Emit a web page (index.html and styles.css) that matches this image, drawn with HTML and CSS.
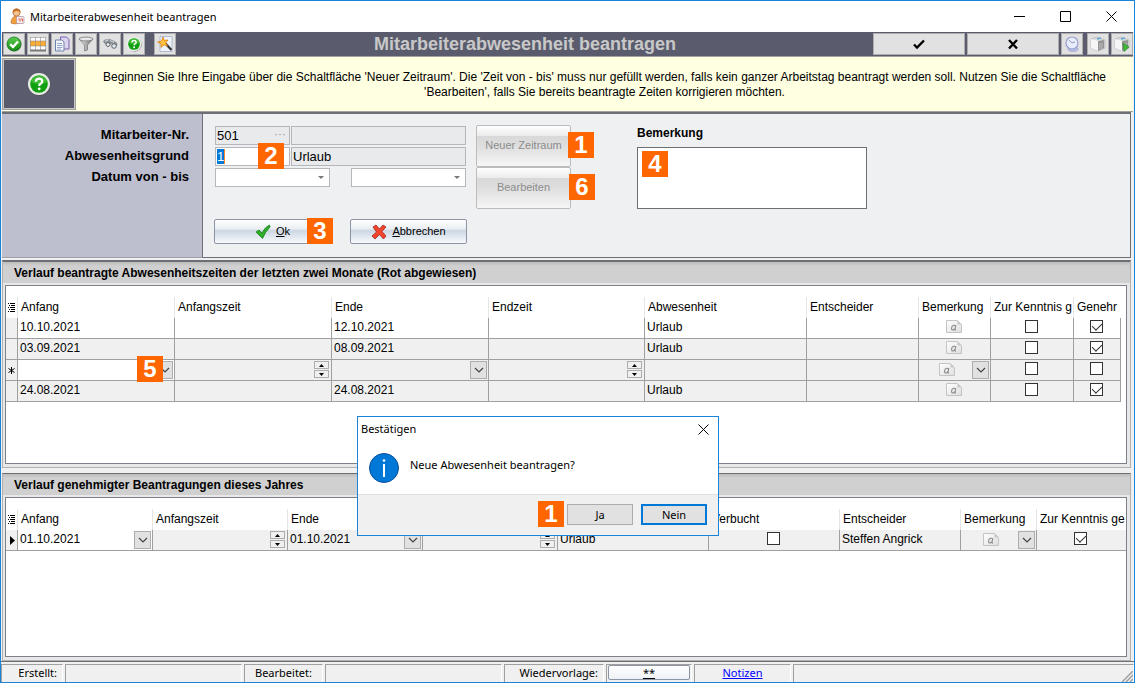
FILE: index.html
```html
<!DOCTYPE html>
<html lang="de">
<head>
<meta charset="utf-8">
<title>Mitarbeiterabwesenheit beantragen</title>
<link rel="stylesheet" href="styles.css">
</head>
<body>
<svg class="defs" aria-hidden="true">
  <defs>
    <linearGradient id="green" x1="0" y1="0" x2="0" y2="1"><stop offset="0" stop-color="#5fce4e"/><stop offset="1" stop-color="#0d8a10"/></linearGradient>
    <linearGradient id="steel" x1="0" y1="0" x2="1" y2="0"><stop offset="0" stop-color="#f4f4f4"/><stop offset="1" stop-color="#6c6c6c"/></linearGradient>
    <linearGradient id="fade" x1="0" y1="0" x2="1" y2="1"><stop offset="0" stop-color="#ffffff"/><stop offset="1" stop-color="#dedede"/></linearGradient>
    <symbol id="help" viewBox="0 0 24 24">
      <circle cx="13" cy="13" r="10.5" fill="#444" opacity=".6"/>
      <circle cx="12" cy="12" r="11" fill="#e9ede6"/>
      <circle cx="12" cy="12" r="8.8" fill="#12a012"/>
      <path d="M4 10a8.300 8.300 0 0 1 16 0q-8 4-16 0z" fill="#5fd04c" opacity=".6"/>
      <path d="M8.800 9.600q.3-3 3.300-3t3.200 2.700q0 1.500-1.800 2.500-1.300.8-1.300 2.200" fill="none" stroke="#fff" stroke-width="2.200"/>
      <circle cx="12.200" cy="16.800" r="1.400" fill="#fff"/>
    </symbol>
    <symbol id="chevron" viewBox="0 0 10 10"><path d="M1 3l4 4 4-4" fill="none" stroke="#444" stroke-width="1.200"/></symbol>
    <symbol id="up" viewBox="0 0 5 3"><path d="M0 3h5L2.500 0z"/></symbol>
    <symbol id="down" viewBox="0 0 5 3"><path d="M0 0h5L2.500 3z"/></symbol>
    <symbol id="memo" viewBox="0 0 16 13">
      <path d="M.5.5h11l4 4v8H.5z" fill="url(#fade)" stroke="#c4c4c4"/>
      <path d="M11.500.5v4h4z" fill="#c8c8c8"/>
      <path d="M9.800 5.200L9 9.600q0 .7.9.5M9.500 6q-.8-1-2-.7Q5.600 6 5.500 8.400q.2 1.900 1.800 1.500Q8.600 9.500 9.300 8" fill="none" stroke="#8c8c8c" stroke-width="1.100"/>
    </symbol>
    <symbol id="list" viewBox="0 0 7 9"><path d="M0 .5h1m1 0h5M1 2.500h1m1 0h4M0 4.500h1m1 0h5M1 6.500h1m1 0h4M0 8.500h1m1 0h5" stroke="#000"/></symbol>
    <symbol id="close" viewBox="0 0 11 11"><path d="M.5.5l10 10M10.500.5l-10 10" stroke="#000" stroke-width="1"/></symbol>
    <symbol id="box" viewBox="0 0 16 16">
      <path d="M1 3l6-2 8 3v8l-7 3-7-3z" fill="#dcdcdc" stroke="#aaa" stroke-width=".6"/>
      <path d="M1 3l7 2v10l-7-3z" fill="#f6f6f6"/>
      <path d="M8 5l6-1v8l-6 3z" fill="#969696"/>
      <path d="M9 8h4M9 10h4M9 12h3" stroke="#c8c8c8" stroke-width=".8"/>
      <path d="M7 3l4-1" stroke="#5aa7d8" stroke-width="1.500"/>
    </symbol>
  </defs>
</svg>

<div class="window">
  <header class="titlebar">
    <svg class="app-icon" viewBox="0 0 16 17">
      <path d="M1 15q0-6 5-7l4 2v5q-5 2-9 0z" fill="#f0a03c" stroke="#b9652a" stroke-width=".6"/>
      <circle cx="6.500" cy="4.500" r="3.600" fill="#f6c38e" stroke="#a35a22" stroke-width=".7"/>
      <path d="M2.800 5Q2.600.4 7 .6q3.800.5 3.500 4.200Q8.500 2.500 6 3z" fill="#c5732c"/>
      <rect x="6.500" y="8.500" width="7.500" height="7" rx="1" fill="#f7eaea" stroke="#a98fa0" stroke-width=".7"/>
      <path d="M8.500 11h1.500v2.500M11 11h1.500v2.500" fill="none" stroke="#d8543c" stroke-width=".9"/>
    </svg>
    <h1 class="window-title">Mitarbeiterabwesenheit beantragen</h1>
    <div class="window-controls">
      <button type="button" aria-label="Minimieren"><svg viewBox="0 0 11 11"><path d="M0 5.500h11" stroke="#000"/></svg></button>
      <button type="button" aria-label="Maximieren"><svg viewBox="0 0 11 11"><path d="M.5.5h10v10H.5z" fill="none" stroke="#000"/></svg></button>
      <button type="button" aria-label="Schließen"><svg><use href="#close"/></svg></button>
    </div>
  </header>

  <div class="toolbar">
    <div class="tools">
      <button type="button" class="tool" aria-label="Speichern"><svg viewBox="0 0 16 16"><circle cx="8.500" cy="8.500" r="7" fill="#555" opacity=".5"/><circle cx="8" cy="8" r="7" fill="url(#green)" stroke="#0b6d12" stroke-width=".7"/><path d="M4.200 8.200l2.800 2.800 5-5.500" fill="none" stroke="#fff" stroke-width="2.400"/></svg></button>
      <button type="button" class="tool" aria-label="Tabelle"><svg viewBox="0 0 16 16"><path d="M0 1h16v14H0z" fill="#fff"/><path d="M0 5h16v5H0z" fill="#ffad33"/><path d="M0 1.500h16M0 5h16M0 10h16M.5 1v14M5.500 1v14M10.500 1v14M15.500 1v14" stroke="#8c8c8c" stroke-width=".6"/><path d="M0 14.500h16" stroke="#777" stroke-width="2"/></svg></button>
      <button type="button" class="tool" aria-label="Kopieren"><svg viewBox="0 0 16 16"><path d="M6.500 1h6l2.500 2.500V13H6.500z" fill="#dcd3ef" stroke="#7a62ac"/><path d="M1.500 4h6.500l2 2v9H1.500z" fill="#f3f6fb" stroke="#6e83ab"/><path d="M3 7.500h5M3 9.500h5.500M3 11.500h5.500M3 13.200h4" stroke="#8aa2c8" stroke-width=".9"/></svg></button>
      <button type="button" class="tool" aria-label="Filter"><svg viewBox="0 0 16 16"><path d="M1 3l5.500 6v6l3-1V9L15 3z" fill="url(#steel)" stroke="#666" stroke-width=".6"/><ellipse cx="8" cy="3" rx="7" ry="1.900" fill="#e8e8e8" stroke="#777" stroke-width=".8"/></svg></button>
      <button type="button" class="tool" aria-label="Suchen"><svg viewBox="0 0 16 16"><path d="M1 5.500Q2.500 2.500 6 3.500q1.500-1 3 0l5 2.500q1.500 1 1.500 3l-2 2-4-3-3 1-4-1.500z" fill="#8b9095"/><path d="M3 5l3-.5M8 4.500l4 2" stroke="#d8dcdf"/><circle cx="6" cy="8.500" r="2" fill="#dce9f3" stroke="#666"/><circle cx="12" cy="10" r="2.300" fill="#dce9f3" stroke="#666"/></svg></button>
      <button type="button" class="tool" aria-label="Hilfe"><svg><use href="#help"/></svg></button>
      <button type="button" class="tool tool-apart" aria-label="Assistent"><svg viewBox="0 0 16 16"><path d="M3 .5h12v15H3z" fill="#eef3fb" stroke="#9fb1cc" stroke-width=".8"/><path d="M8 7l6.500 7" stroke="#333" stroke-width="2.200"/><path d="M6 1l1.300 3.500L11 4 8.600 6.800 10.500 10 7 8.800 4 11.500 4.200 8 .8 6l3.700-.8z" fill="#ffc43a" stroke="#e07d10" stroke-width=".8"/></svg></button>
    </div>
    <h2 class="toolbar-title">Mitarbeiterabwesenheit beantragen</h2>
    <div class="actions">
      <button type="button" class="action" aria-label="Bestätigen"><svg viewBox="0 0 12 12"><path d="M1 6.500l3 3L11 2.500" fill="none" stroke="#000" stroke-width="2.300"/></svg></button>
      <button type="button" class="action" aria-label="Verwerfen"><svg viewBox="0 0 12 12"><path d="M2 2l8 8.500M10 2L2 10.500" stroke="#000" stroke-width="2.400"/></svg></button>
      <button type="button" class="tool" aria-label="Wiedervorlage"><svg viewBox="0 0 16 16"><ellipse cx="9" cy="13" rx="5" ry="2.300" fill="#b9c0e8" stroke="#8e96c4" stroke-width=".6"/><circle cx="8" cy="7" r="6" fill="#e8ecfc" stroke="#98a0cf" stroke-width="1.200"/><path d="M5 4l3 3 3-1" fill="none" stroke="#7a84ad" stroke-width=".8"/></svg></button>
      <button type="button" class="tool tool-box" aria-label="Modul"><svg><use href="#box"/></svg></button>
      <button type="button" class="tool" aria-label="Modul starten"><svg viewBox="0 0 16 16"><use href="#box"/><path d="M9 7l6 4-5 4.500z" fill="#42b83b" stroke="#1e8220" stroke-width=".6"/></svg></button>
    </div>
  </div>

  <div class="notice">
    <button type="button" class="notice-help" aria-label="Hilfe"><svg><use href="#help"/></svg></button>
    <p class="notice-text">Beginnen Sie Ihre Eingabe über die Schaltfläche 'Neuer Zeitraum'. Die 'Zeit von - bis' muss nur gefüllt werden, falls kein ganzer Arbeitstag beantragt werden soll. Nutzen Sie die Schaltfläche 'Bearbeiten', falls Sie bereits beantragte Zeiten korrigieren möchten.</p>
  </div>

  <form class="request">
    <div class="labels">
      <label for="nr">Mitarbeiter-Nr.</label>
      <label for="grund">Abwesenheitsgrund</label>
      <label for="von">Datum von - bis</label>
    </div>
    <div class="panel">
      <div class="fields">
        <div class="field-row">
          <span class="lookup"><input id="nr" class="field" value="501" readonly><span class="dots">···</span></span>
          <input class="field wide" aria-label="Name" readonly>
        </div>
        <div class="field-row">
          <span class="lookup"><span class="field code"><input id="grund" value="1"></span><span class="badge badge-2">2</span></span>
          <input class="field wide" aria-label="Grund" value="Urlaub" readonly>
        </div>
        <div class="field-row dates">
          <span class="date"><select id="von"><option></option></select></span>
          <span class="date"><select aria-label="Datum bis"><option></option></select></span>
        </div>
        <div class="field-row confirm">
          <button type="button" class="glossy"><svg viewBox="0 0 16 16"><path d="M1 8l3-2 3 3Q10 3 14.500 1L15 3Q10 8 7.500 14.500z" fill="#2fae2a" stroke="#16801a" stroke-width=".8"/></svg><span><u>O</u>k</span><span class="badge badge-3">3</span></button>
          <button type="button" class="glossy"><svg viewBox="0 0 16 16"><path d="M2 3l3-2 3.500 4L12 1l3 2-4 4.500 4 4.500-2.500 3L8.500 10.500 4 15l-3-3 4.500-4z" fill="#f0452c" stroke="#a5261a" stroke-width=".8"/></svg><span><u>A</u>bbrechen</span></button>
        </div>
      </div>
      <div class="periods">
        <div class="period"><button type="button" class="muted" disabled>Neuer Zeitraum</button><span class="badge badge-1">1</span></div>
        <div class="period"><button type="button" class="muted" disabled>Bearbeiten</button><span class="badge badge-6">6</span></div>
      </div>
      <div class="remark">
        <label for="bemerkung">Bemerkung</label>
        <div class="remark-box"><textarea id="bemerkung"></textarea><span class="badge badge-4">4</span></div>
      </div>
    </div>
  </form>

  <section class="history history-requested">
    <h3>Verlauf beantragte Abwesenheitszeiten der letzten zwei Monate (Rot abgewiesen)</h3>
    <div class="grid-box">
      <table class="grid">
        <colgroup><col class="w12"><col class="w157"><col class="w157"><col class="w157"><col class="w156"><col class="w162"><col class="w112"><col class="w72"><col class="w83"><col class="w47"></colgroup>
        <thead>
          <tr><th class="mark"><svg class="list"><use href="#list"/></svg></th><th>Anfang</th><th>Anfangszeit</th><th>Ende</th><th>Endzeit</th><th>Abwesenheit</th><th>Entscheider</th><th>Bemerkung</th><th>Zur Kenntnis g</th><th>Genehr</th></tr>
        </thead>
        <tbody>
          <tr><td class="mark"></td><td>10.10.2021</td><td></td><td>12.10.2021</td><td></td><td>Urlaub</td><td></td><td class="mid"><svg class="memo"><use href="#memo"/></svg></td><td class="mid"><input type="checkbox" aria-label="Zur Kenntnis genommen"></td><td class="mid"><input type="checkbox" checked aria-label="Genehmigt"></td></tr>
          <tr class="shade"><td class="mark"></td><td>03.09.2021</td><td></td><td>08.09.2021</td><td></td><td>Urlaub</td><td></td><td class="mid"><svg class="memo"><use href="#memo"/></svg></td><td class="mid"><input type="checkbox" aria-label="Zur Kenntnis genommen"></td><td class="mid"><input type="checkbox" checked aria-label="Genehmigt"></td></tr>
          <tr class="shade"><td class="mark"><svg class="star" viewBox="0 0 7 7"><path d="M3.500 0v7M.5 1.500l6 4M6.500 1.500l-6 4" stroke="#000"/></svg></td>
            <td class="edit"><div class="cell"><button type="button" class="drop" aria-label="Anfang wählen"><svg><use href="#chevron"/></svg></button><span class="badge badge-5">5</span></div></td>
            <td><div class="cell"><span class="spin"><button type="button" aria-label="Später"><svg><use href="#up"/></svg></button><button type="button" aria-label="Früher"><svg><use href="#down"/></svg></button></span></div></td>
            <td><div class="cell"><button type="button" class="drop" aria-label="Ende wählen"><svg><use href="#chevron"/></svg></button></div></td>
            <td><div class="cell"><span class="spin"><button type="button" aria-label="Später"><svg><use href="#up"/></svg></button><button type="button" aria-label="Früher"><svg><use href="#down"/></svg></button></span></div></td>
            <td></td><td></td>
            <td><div class="cell"><span class="memo-slot"><svg class="memo"><use href="#memo"/></svg></span><button type="button" class="drop" aria-label="Bemerkung öffnen"><svg><use href="#chevron"/></svg></button></div></td>
            <td class="mid"><input type="checkbox" aria-label="Zur Kenntnis genommen"></td><td class="mid"><input type="checkbox" aria-label="Genehmigt"></td></tr>
          <tr class="shade"><td class="mark"></td><td>24.08.2021</td><td></td><td>24.08.2021</td><td></td><td>Urlaub</td><td></td><td class="mid"><svg class="memo"><use href="#memo"/></svg></td><td class="mid"><input type="checkbox" aria-label="Zur Kenntnis genommen"></td><td class="mid"><input type="checkbox" checked aria-label="Genehmigt"></td></tr>
        </tbody>
      </table>
    </div>
  </section>

  <section class="history history-approved">
    <h3>Verlauf genehmigter Beantragungen dieses Jahres</h3>
    <div class="grid-box">
      <table class="grid">
        <colgroup><col class="w12"><col class="w135"><col class="w135"><col class="w135"><col class="w135"><col class="w151"><col class="w131"><col class="w121"><col class="w76"><col class="w90"></colgroup>
        <thead>
          <tr><th class="mark"><svg class="list"><use href="#list"/></svg></th><th>Anfang</th><th>Anfangszeit</th><th>Ende</th><th></th><th></th><th>Verbucht</th><th>Entscheider</th><th>Bemerkung</th><th>Zur Kenntnis ge</th></tr>
        </thead>
        <tbody>
          <tr class="shade"><td class="mark"><svg class="current" viewBox="0 0 5 9"><path d="M0 0l5 4.500L0 9z"/></svg></td>
            <td class="edit"><div class="cell"><span class="value">01.10.2021</span><button type="button" class="drop" aria-label="Anfang wählen"><svg><use href="#chevron"/></svg></button></div></td>
            <td><div class="cell"><span class="spin"><button type="button" aria-label="Später"><svg><use href="#up"/></svg></button><button type="button" aria-label="Früher"><svg><use href="#down"/></svg></button></span></div></td>
            <td><div class="cell"><span class="value">01.10.2021</span><button type="button" class="drop" aria-label="Ende wählen"><svg><use href="#chevron"/></svg></button></div></td>
            <td><div class="cell"><span class="spin"><button type="button" aria-label="Später"><svg><use href="#up"/></svg></button><button type="button" aria-label="Früher"><svg><use href="#down"/></svg></button></span></div></td>
            <td>Urlaub</td><td class="mid"><input type="checkbox" aria-label="Verbucht"></td><td>Steffen Angrick</td>
            <td><div class="cell"><span class="memo-slot"><svg class="memo"><use href="#memo"/></svg></span><button type="button" class="drop" aria-label="Bemerkung öffnen"><svg><use href="#chevron"/></svg></button></div></td>
            <td class="mid"><input type="checkbox" checked aria-label="Zur Kenntnis genommen"></td></tr>
        </tbody>
      </table>
    </div>
  </section>

  <footer class="status">
    <span class="pane pane-created">Erstellt:</span>
    <span class="pane pane-value"></span>
    <span class="pane pane-edited">Bearbeitet:</span>
    <span class="pane pane-value"></span>
    <span class="pane pane-due">Wiedervorlage:</span>
    <span class="pane pane-button"><button type="button" class="glossy stars"><u>**</u></button></span>
    <span class="pane pane-notes"><a href="#notizen">Notizen</a></span>
    <span class="pane pane-rest"><svg viewBox="0 0 11 11"><path d="M0 11L11 0M4 11l7-7M8 11l3-3" stroke="#a0a0a0" stroke-width="1.500"/></svg></span>
  </footer>

  <div class="dialog" role="dialog" aria-labelledby="dialog-title">
    <div class="dialog-head"><h4 id="dialog-title">Bestätigen</h4><button type="button" class="dialog-close" aria-label="Schließen"><svg><use href="#close"/></svg></button></div>
    <div class="dialog-body">
      <svg class="info" viewBox="0 0 30 30"><circle cx="15" cy="15" r="14.500" fill="#0078d7" stroke="#0b4f92"/><path d="M15 11v13" stroke="#fff" stroke-width="2"/><circle cx="15" cy="7.500" r="1.300" fill="#fff"/></svg>
      <p>Neue Abwesenheit beantragen?</p>
    </div>
    <div class="dialog-foot"><span class="badge-slot">1</span><button type="button" class="choice">Ja</button><button type="button" class="choice primary">Nein</button></div>
  </div>
</div>
</body>
</html>
```
FILE: styles.css
```css
* { box-sizing: border-box; }

body {
  margin: 0;
  font: 12px/15px "Liberation Sans", Arial, sans-serif;
  color: #000;
  background: #f0f0f0;
}

h1, h2, h3, h4, p { margin: 0; font-size: inherit; font-weight: inherit; }
button, input, select, textarea { font: inherit; color: inherit; margin: 0; padding: 0; border-radius: 0; outline: 0; }
svg { display: block; flex: none; }
.defs { position: absolute; width: 0; height: 0; }

.window {
  position: relative;
  display: flex;
  flex-direction: column;
  min-height: 100vh;
  border: 1px solid #1883d7;
  overflow: hidden;
}

/* title bar */
.titlebar { display: flex; align-items: center; height: 31px; padding-left: 9px; background: #fff; }
.app-icon { width: 16px; height: 17px; }
.window-title { flex: 1; margin-left: 4px; font: 11px/16px "Noto Sans", sans-serif; }
.window-controls { display: flex; }
.window-controls button { display: flex; align-items: center; justify-content: center; width: 46px; height: 30px; border: 0; background: none; }
.window-controls svg, .dialog-close svg { width: 11px; height: 11px; }

/* toolbar */
.toolbar {
  display: flex;
  align-items: center;
  height: 25px;
  margin: 0 1px;
  background: #5a5c6d;
  border-bottom: 1px solid #a0a0a0;
}
.tools, .actions { display: flex; gap: 2px; flex: 1; }
.tools { padding-left: 1px; }
.actions { justify-content: flex-end; }
.tool, .action {
  display: flex;
  align-items: center;
  justify-content: center;
  width: 22px;
  height: 22px;
  border: 1px solid #adadad;
  background: #e1e1e1;
}
.tool svg { width: 16px; height: 16px; }
.tool-apart { margin-left: 7px; }
.tool-box { margin-left: 2px; }
.action { width: 92px; }
.action svg { width: 12px; height: 12px; }
.toolbar-title { margin-right: 86px; font-size: 18px; font-weight: bold; line-height: 22px; color: #c8c8c8; white-space: nowrap; }

/* notice */
.notice { display: flex; height: 55px; margin: 0 1px; background: #ffffe1; border-bottom: 1px solid #a0a0a0; }
.notice-help {
  display: flex;
  align-items: center;
  justify-content: center;
  width: 74px;
  margin: 1px 0;
  padding: 0 1px 1px 0;
  border: 1px solid #a0a0a0;
  background: #5a5c6d;
  box-shadow: inset 0 0 0 1px #c8c8c8;
}
.notice-help svg { width: 24px; height: 24px; }
.notice-text { flex: 1; padding: 13px 14px 0; text-align: center; }

/* request form */
.request { display: flex; height: 148px; margin: 0 3px 0 1px; padding-bottom: 2px; border-top: 2px solid #6d6f75; background: #eff0f2; }
.labels {
  display: flex;
  flex-direction: column;
  width: 201px;
  padding: 10px 13px 0 0;
  background: #bdbece;
  border-right: 1px solid #6d6f75;
  border-bottom: 1px solid #a0a0a8;
  text-align: right;
  font-size: 13px;
  font-weight: bold;
  line-height: 21px;
}
.panel { display: flex; flex: 1; padding: 11px 11px 0; border-right: 1px solid #6d6f75; border-bottom: 1px solid #6d6f75; }
.fields { display: flex; flex-direction: column; gap: 2px; width: 253px; padding-top: 1px; }
.field-row { display: flex; gap: 1px; height: 19px; padding: 0 1px; }
.lookup { position: relative; width: 75px; display: flex; }
.field { width: 100%; height: 19px; padding: 0 1px; border: 1px solid #b5b7bb; background: #e9eaec; font-size: 13px; line-height: 17px; }
.wide { width: 175px; }
.dots { position: absolute; right: 4px; top: 1px; color: #999; line-height: 15px; }
.code { background: #fff; }
.code input { width: 8px; height: 15px; margin-top: 1px; border: 0; border-right: 1px solid #ff8728; background: #0078d7; color: #fff; display: block; line-height: 15px; }
.dates, .confirm { justify-content: space-between; }
.date { position: relative; width: 115px; }
.date select { width: 100%; height: 19px; border: 1px solid #b5b7bb; background: #fff; appearance: none; }
.date::after { content: ""; position: absolute; right: 6px; top: 8px; border: 3px solid transparent; border-top-color: #777; border-bottom: 0; }
.confirm { height: 25px; margin-top: 30px; padding: 0; }

.glossy {
  position: relative;
  display: flex;
  align-items: center;
  justify-content: center;
  gap: 5px;
  width: 117px;
  height: 25px;
  border: 1px solid #8b95a5;
  border-radius: 2px;
  background: linear-gradient(#fff 0, #e9edf2 40%, #cdd7e2 45%, #dfe6ee 70%, #f8fafc 100%);
  font-size: 11px;
}
.glossy svg { width: 16px; height: 16px; }

.periods { width: 95px; margin-left: 9px; }
.period { position: relative; }
.muted {
  display: block;
  width: 95px;
  height: 42px;
  padding-bottom: 2px;
  border: 1px solid #bcbcbc;
  border-radius: 2px;
  background: linear-gradient(#fff 0, #ececec 24%, #d8d8d8 25%, #dedede 50%, #f6f6f6 100%);
  color: #8c8c8c;
  font-size: 11px;
}

.remark { margin-left: 66px; }
.remark label { display: block; height: 22px; padding-top: 1px; font-weight: bold; }
.remark-box { position: relative; width: 230px; }
.remark textarea { display: block; width: 100%; height: 62px; border: 1px solid #6d6f75; background: #fff; resize: none; }

/* numbered call-outs */
.badge, .badge-slot {
  width: 26px;
  height: 26px;
  background: #f60;
  color: #fff;
  font-size: 24px;
  font-weight: bold;
  line-height: 26px;
  text-align: center;
}
.badge { position: absolute; z-index: 1; }
.badge-1 { left: 92px; top: 7px; }
.badge-2 { left: 43px; top: -4px; }
.badge-3 { right: -3px; top: -2px; }
.badge-4 { left: 5px; top: 4px; }
.badge-5 { right: 11px; top: -4px; }
.badge-6 { left: 93px; top: 7px; }

/* history sections */
.history {
  display: flex;
  flex-direction: column;
  margin: 0 3px 0 1px;
  background: #e8e8e8;
  border: 1px solid #b0b0b0;
  border-top: 1px solid #6d6f75;
}
.history h3 { height: 21px; padding: 4px 11px 2px; background: linear-gradient(#bdbdbd, #d0d0d0 4px); font-weight: bold; line-height: 15px; }
.history-requested { flex: 1 1 207px; margin-bottom: 5px; border-top-width: 2px; }
.history-approved { flex: 1 1 187px; }
.grid-box { flex: 1; margin: 2px 3px 3px 2px; padding-top: 11px; border: 1px solid #7c8088; background: #fff; overflow: hidden; }
.grid { table-layout: fixed; width: 0; border-collapse: separate; border-spacing: 0; }
.grid th, .grid td { height: 21px; padding: 0 0 0 2px; overflow: hidden; white-space: nowrap; text-align: left; font-weight: normal; line-height: 19px; border-right: 1px solid #a0a0a0; }
.grid th { padding-left: 3px; border-right-color: #e5e5e5; }
.grid td { border-bottom: 1px solid #a0a0a0; padding-bottom: 1px; }
.grid th:last-child { border-right-color: #fff; }
.grid .mark { padding: 0 0 0 2px; background: #f0f0f0; vertical-align: middle; }
.grid th.mark { background: #fff; }
.grid .mid { text-align: center; padding: 0 2px 3px 0; vertical-align: middle; }
.mid svg { margin: 0 auto; }
.shade td { background: #f0f0f0; }
.shade td.edit { background: #fff; overflow: visible; }
.w12 { width: 12px; } .w47 { width: 47px; } .w72 { width: 72px; } .w76 { width: 76px; }
.w83 { width: 83px; } .w90 { width: 90px; } .w112 { width: 112px; } .w121 { width: 121px; }
.w131 { width: 131px; } .w135 { width: 135px; } .w151 { width: 151px; } .w156 { width: 156px; }
.w157 { width: 157px; } .w162 { width: 162px; }
.list { width: 7px; height: 9px; }
.star { width: 7px; height: 7px; }
.current { width: 5px; height: 9px; margin-left: 2px; }
.memo { width: 16px; height: 13px; }
.cell { position: relative; display: flex; justify-content: flex-end; align-items: center; height: 19px; padding-right: 1px; }
.value, .memo-slot { flex: 1; }
.memo-slot .memo { margin: 0 auto; }
.drop { display: flex; align-items: center; justify-content: center; width: 17px; height: 18px; border: 1px solid #adadad; background: #e1e1e1; }
.drop svg { width: 10px; height: 10px; }
.spin { display: flex; flex-direction: column; gap: 1px; padding-right: 1px; }
.spin button { display: flex; align-items: center; justify-content: center; width: 15px; height: 8px; border: 1px solid #adadad; background: #f0f0f0; }
.spin svg { width: 5px; height: 3px; }

input[type="checkbox"] { appearance: none; display: block; position: relative; width: 13px; height: 13px; margin: 0 auto; border: 1px solid #333; background: #fff; }
input[type="checkbox"]:checked::after {
  content: "";
  position: absolute;
  left: 3px;
  top: 0;
  width: 5px;
  height: 8px;
  border: solid #333;
  border-width: 0 1px 1px 0;
  transform: rotate(45deg);
}

/* status bar */
.status { display: flex; gap: 2px; height: 21px; padding-top: 2px; border-top: 1px solid #6d6f75; font: 11px/15px "Noto Sans", sans-serif; }
.pane { height: 18px; border-left: 1px solid #a0a0a0; border-top: 1px solid #a0a0a0; border-right: 1px solid #fff; white-space: nowrap; }
.pane-created { width: 62px; padding-right: 5px; text-align: right; }
.pane-value { width: 177px; }
.pane-edited { width: 79px; text-align: center; }
.pane-due { width: 100px; padding-right: 5px; text-align: right; }
.pane-button { width: 86px; padding: 0 1px; }
.pane-notes { width: 97px; text-align: center; }
.pane-notes a { color: #00f; }
.pane-rest { display: flex; flex: 1; align-items: flex-end; justify-content: flex-end; }
.pane-rest svg { width: 11px; height: 11px; }
.stars { width: 100%; height: 15px; background: linear-gradient(#fff, #eef1f5); font-size: 11px; line-height: 13px; }

/* dialog */
.dialog {
  position: absolute;
  left: 356px;
  top: 415px;
  z-index: 2;
  width: 362px;
  border: 1px solid #1883d7;
  background: #fff;
  font: 11px/15px "Noto Sans", sans-serif;
}
.dialog-head { display: flex; justify-content: space-between; padding: 4px 9px 0 3px; }
.dialog-close { display: flex; align-items: center; border: 0; background: none; height: 17px; }
.dialog-body { display: flex; gap: 11px; height: 56px; padding: 15px 11px 0; }
.dialog-body p { padding-top: 4px; }
.info { width: 30px; height: 30px; }
.dialog-foot { display: flex; gap: 8px; justify-content: flex-end; height: 41px; padding: 9px 11px 0; border-top: 1px solid #dfdfdf; background: #f0f0f0; }
.dialog-foot .badge-slot { margin: -3px -5px 0 0; font-family: "Liberation Sans", sans-serif; }
.choice { width: 66px; height: 21px; border: 1px solid #adadad; background: #e1e1e1; }
.primary { border: 2px solid #0078d7; }
```
